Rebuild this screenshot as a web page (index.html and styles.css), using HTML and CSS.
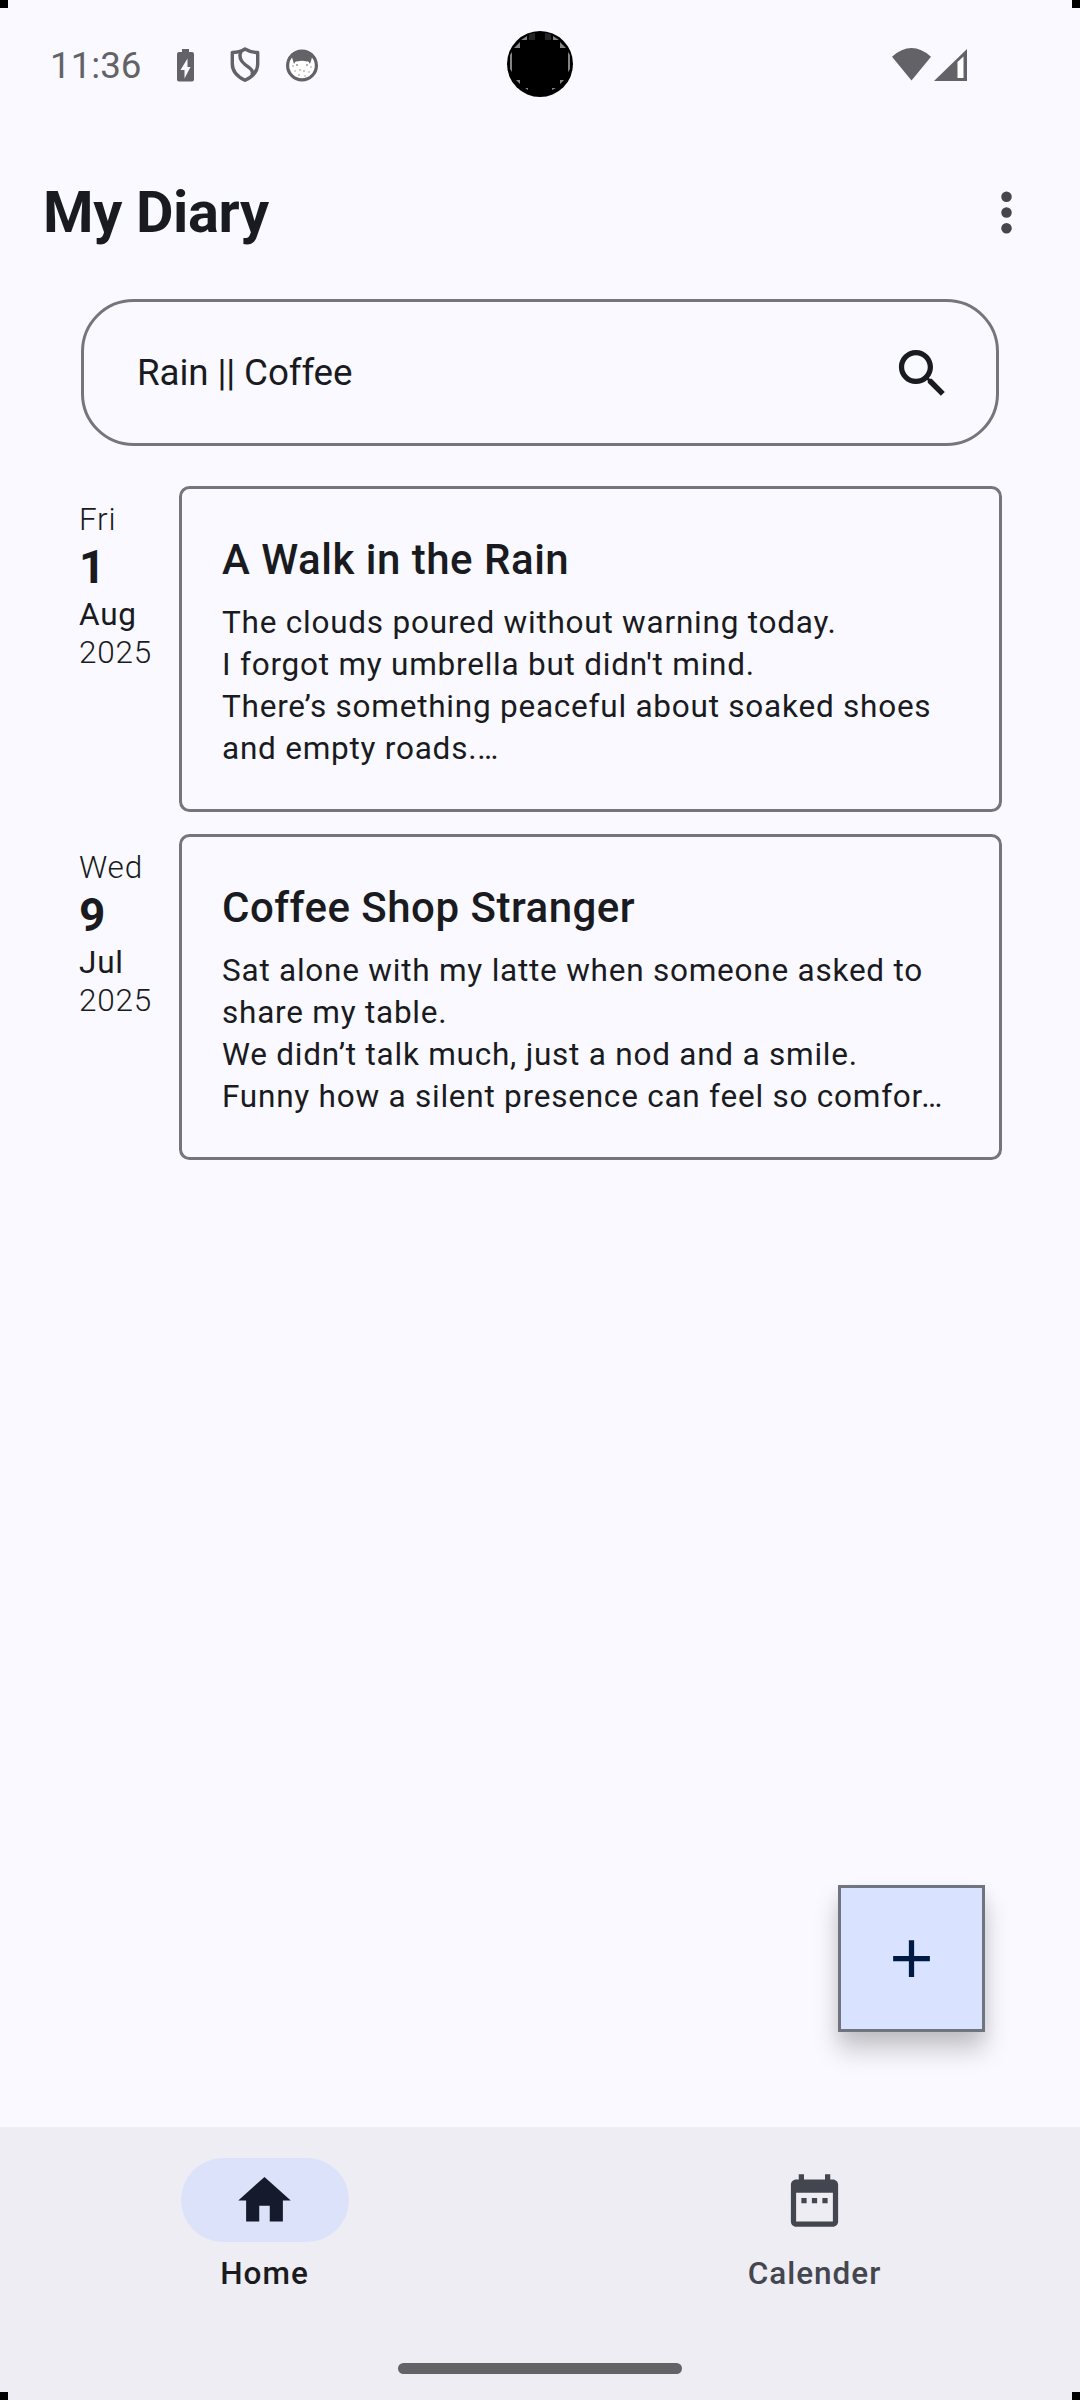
FILE: index.html
```html
<!DOCTYPE html>
<html lang="en">
<head>
<meta charset="utf-8">
<title>My Diary</title>
<link rel="stylesheet" href="styles.css">
</head>
<body>
<div class="screen">
  <i class="corner corner-tl"></i><i class="corner corner-tr"></i><i class="corner corner-bl"></i><i class="corner corner-br"></i>
  <header class="status">
    <span class="time">11:36</span>
    <svg class="s-battery" width="17" height="33" viewBox="0 0 17 33"><path fill="#636367" fill-rule="evenodd" d="M5 0h7v3h3a2 2 0 0 1 2 2v25.500a2 2 0 0 1-2 2H2a2 2 0 0 1-2-2V5a2 2 0 0 1 2-2h3zM10.500 9.500 3.500 21h4v8.500L13.500 18h-3z"/></svg>
    <svg class="s-shield" width="30" height="36" viewBox="0 0 30 36"><g fill="none" stroke="#636367" stroke-width="3.400" stroke-linejoin="round"><path d="M15 2C11 4.500 7 5.500 2.300 5.500V17C2.300 25 8 30 15 33.300 22 30 27.700 25 27.700 17V5.500C23 5.500 19 4.500 15 2Z"/><path d="M11 4C8.500 10 10.500 14 15 17.500S24 23 22 28"/></g></svg>
    <svg class="s-face" width="32" height="33" viewBox="0 0 32 33"><circle cx="16" cy="16.500" r="14.400" fill="#fff" stroke="#636367" stroke-width="3.200"/><path fill="#636367" d="M5 5Q16-3 27 5L24 15Q22.500 11.500 21 12.500 16 11 11 12.500 9.500 11.500 8 15Z"/><g fill="#8a8a8d"><circle cx="7" cy="17" r=".8"/><circle cx="11" cy="16" r=".9"/><circle cx="21" cy="16" r=".9"/><circle cx="25" cy="18" r=".7"/><circle cx="9" cy="22" r=".7"/><circle cx="14" cy="21" r=".8"/><circle cx="18" cy="22" r=".8"/><circle cx="23" cy="23" r=".7"/><circle cx="13" cy="26" r=".8"/><circle cx="19" cy="27" r=".7"/></g></svg>
    <svg class="camera" width="66" height="66" viewBox="0 0 66 66"><circle cx="33" cy="33" r="33"/><g fill="#858585"><path d="M14 9 20 5V9ZM7 17 13 11V17ZM46 5 52 9H46ZM53 11 59 17H53ZM9 49h4v4ZM57 49h-4v4ZM18 57h3v2ZM45 57h4l-4 2Z"/><path d="M3 24 5 21V41L3 38ZM63 24 61 21V41L63 38Z"/></g><path fill="#242426" d="M22 3 28 2V9H22ZM38 2 44 3V9H38Z"/></svg>
    <svg class="s-net" width="76" height="33" viewBox="0 0 76 33"><path fill="#636367" d="M0 8.700Q19.500-8.500 39 8.700L19.500 32.500ZM42 33 75 1V33Z"/><path fill="#fff" d="M65.500 14 71.500 8.500V30H65.500Z"/></svg>
  </header>
  <div class="appbar">
    <h1>My Diary</h1>
    <svg width="63" height="63" viewBox="0 0 24 24" fill="#44464c"><circle cx="12" cy="6" r="2"/><circle cx="12" cy="12" r="2"/><circle cx="12" cy="18" r="2"/></svg>
  </div>
  <div class="search">
    <span>Rain || Coffee</span>
    <svg width="63" height="63" viewBox="0 0 24 24" fill="#1a1b20"><path d="M15.500 14h-.79l-.28-.27C15.410 12.590 16 11.110 16 9.500 16 5.910 13.090 3 9.500 3S3 5.910 3 9.500 5.910 16 9.500 16c1.610 0 3.090-.59 4.230-1.570l.27.28v.79l5 4.990L20.490 19l-4.990-5zm-6 0C7.010 14 5 11.990 5 9.500S7.010 5 9.500 5 14 7.010 14 9.500 11.990 14 9.500 14z"/></svg>
  </div>
  <main class="entries">
    <article class="entry">
      <div class="date"><span class="thin">Fri</span><b>1</b><span>Aug</span><span class="thin year">2025</span></div>
      <div class="card"><h2>A Walk in the Rain</h2><p>The clouds poured without warning today.<br>I forgot my umbrella but didn't mind.<br>There’s something peaceful about soaked shoes<br>and empty roads.…</p></div>
    </article>
    <article class="entry">
      <div class="date"><span class="thin">Wed</span><b>9</b><span>Jul</span><span class="thin year">2025</span></div>
      <div class="card"><h2>Coffee Shop Stranger</h2><p>Sat alone with my latte when someone asked to<br>share my table.<br>We didn’t talk much, just a nod and a smile.<br>Funny how a silent presence can feel so comfor…</p></div>
    </article>
  </main>
  <div class="fab"><svg width="63" height="63" viewBox="0 0 24 24" fill="#001a43"><path d="M19 13h-6v6h-2v-6H5v-2h6V5h2v6h6v2z"/></svg></div>
  <nav class="nav">
    <div class="tabs">
      <div class="tab active"><div class="pill"><svg width="63" height="63" viewBox="0 0 24 24" fill="#151b2c"><path d="M10 20v-6h4v6h5v-8h3L12 3 2 12h3v8z"/></svg></div><span>Home</span></div>
      <div class="tab"><div class="pill"><svg width="63" height="63" viewBox="0 0 24 24" fill="#44464f"><path d="M9 11H7v2h2v-2zm4 0h-2v2h2v-2zm4 0h-2v2h2v-2zm2-7h-1V2h-2v2H8V2H6v2H5c-1.110 0-1.990.9-1.990 2L3 20c0 1.100.89 2 2 2h14c1.100 0 2-.9 2-2V6c0-1.100-.9-2-2-2zm0 16H5V9h14v11z"/></svg></div><span>Calender</span></div>
    </div>
    <div class="handle"></div>
  </nav>
</div>
</body>
</html>
```
FILE: styles.css
```css
* { box-sizing: border-box; margin: 0; padding: 0; }
body { font-family: Roboto, sans-serif; color: #1a1b20; background: #f9f9ff; }
svg { display: block; flex: none; }
.screen { position: relative; width: 1080px; height: 2400px; display: flex; flex-direction: column; background: #f9f9ff; overflow: hidden; }
.corner { position: absolute; width: 8px; height: 8px; background: #000; z-index: 2; }
.corner-tl { top: 0; left: 0; }
.corner-tr { top: 0; right: 0; }
.corner-bl { bottom: 0; left: 0; }
.corner-br { bottom: 0; right: 0; }

.status { position: relative; height: 128px; display: flex; align-items: center; padding: 2px 112px 0 50px; color: #636367; }
.time { width: 127px; padding-top: 2px; font-size: 36.750px; line-height: 44px; }
.s-shield { margin-left: 36px; }
.s-face { margin-left: 26px; }
.s-net { margin-left: auto; margin-top: -2px; }
.camera { position: absolute; left: 507px; top: 31px; }

.appbar { height: 171px; display: flex; justify-content: space-between; padding: 53px 42px 0; }
.appbar h1 { margin: -1px 0 0 1px; font-size: 57.750px; line-height: 64px; font-weight: 700; letter-spacing: -0.350px; }

.search { height: 147px; margin: 0 81px; border: 3px solid #75757c; border-radius: 52.500px; display: flex; align-items: center; justify-content: space-between; padding: 1px 42px 0 53px; font-size: 36.750px; line-height: 44px; letter-spacing: -0.120px; }

.entries { flex: 1; display: flex; flex-direction: column; gap: 22px; padding: 40px 78px 0 79px; }
.entry { display: flex; height: 326px; }
.date { width: 100px; padding-top: 15px; display: flex; flex-direction: column; font-size: 31.500px; line-height: 38px; letter-spacing: 0.800px; }
.date b { font-size: 46px; line-height: 57px; }
.thin { font-weight: 300; }
.card { flex: 1; border: 3px solid #75757c; border-radius: 10.500px; padding: 39px 39px 0 40px; }
.card h2 { font-size: 42px; line-height: 63px; font-weight: 500; letter-spacing: 0.500px; }
.card p { margin-top: 11px; font-size: 31.500px; line-height: 42px; letter-spacing: 0.770px; white-space: nowrap; }

.fab { position: absolute; left: 838px; top: 1885px; width: 147px; height: 147px; border: 3px solid #70747f; background: #d9e2ff; display: grid; place-items: center; box-shadow: 0 18px 24px rgba(0,0,0,.2), 0 6px 14px rgba(0,0,0,.06); }

.nav { height: 273px; background: #eeedf3; display: flex; flex-direction: column; align-items: center; justify-content: space-between; padding-bottom: 26px; }
.tabs { align-self: stretch; display: grid; grid-template-columns: 1fr 1fr; gap: 21px; padding: 31px 1px 0 0; }
.tab { display: flex; flex-direction: column; align-items: center; gap: 11px; font-size: 31.500px; line-height: 42px; font-weight: 500; letter-spacing: 1px; color: #44464f; }
.active { color: #1a1b20; }
.pill { width: 168px; height: 84px; border-radius: 42px; display: grid; place-items: center; }
.active .pill { background: #dce2f9; }
.handle { width: 284px; height: 11px; border-radius: 5.500px; background: #636367; }
```
